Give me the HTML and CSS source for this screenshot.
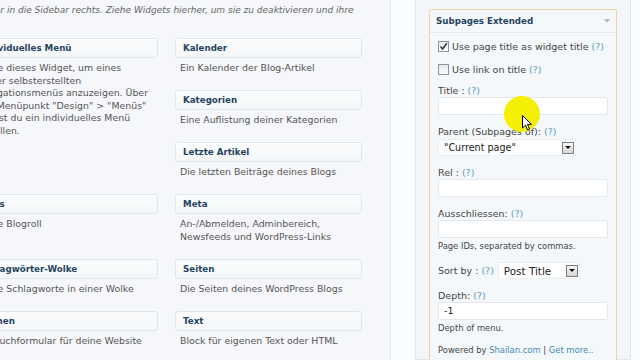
FILE: index.html
```html
<!DOCTYPE html>
<html lang="de">
  <head>
    <meta charset="utf-8">
    <title>Widgets</title>
    <link rel="stylesheet" href="styles.css">
  </head>
  <body>
    <div class="page">
      <div class="available">
        <p class="intro">Um Widgets zu aktivieren, ziehe sie von hier in die Sidebar rechts. Ziehe Widgets hierher, um sie zu deaktivieren und ihre Einstellungen zu löschen.</p>
        <div class="widget-list">
          <div class="widget tall">
            <div class="widget-title">Individuelles Menü</div>
            <div class="widget-desc">Nutze dieses Widget, um eines deiner selbsterstellten Navigationsmenüs anzuzeigen. Über den Menüpunkt &quot;Design&quot; &gt; &quot;Menüs&quot; kannst du ein individuelles Menü erstellen.</div>
          </div>
          <div class="widget">
            <div class="widget-title">Kalender</div>
            <div class="widget-desc">Ein Kalender der Blog-Artikel</div>
          </div>
          <div class="widget">
            <div class="widget-title">Kategorien</div>
            <div class="widget-desc">Eine Auflistung deiner Kategorien</div>
          </div>
          <div class="widget">
            <div class="widget-title">Letzte Artikel</div>
            <div class="widget-desc">Die letzten Beiträge deines Blogs</div>
          </div>
          <div class="widget">
            <div class="widget-title">Links</div>
            <div class="widget-desc">Deine Blogroll</div>
          </div>
          <div class="widget">
            <div class="widget-title">Meta</div>
            <div class="widget-desc">An-/Abmelden, Adminbereich, Newsfeeds und WordPress-Links</div>
          </div>
          <div class="widget">
            <div class="widget-title">Schlagwörter-Wolke</div>
            <div class="widget-desc">Deine Schlagworte in einer Wolke</div>
          </div>
          <div class="widget">
            <div class="widget-title">Seiten</div>
            <div class="widget-desc">Die Seiten deines WordPress Blogs</div>
          </div>
          <div class="widget">
            <div class="widget-title">Suchen</div>
            <div class="widget-desc">Ein Suchformular für deine Website</div>
          </div>
          <div class="widget">
            <div class="widget-title">Text</div>
            <div class="widget-desc">Block für eigenen Text oder HTML</div>
          </div>
        </div>
      </div>

      <div class="sidebar">
        <div class="sb-widget">
          <div class="sb-top">
            <span>Subpages Extended</span>
            <span class="sb-arrow"></span>
          </div>
          <div class="sb-inside">
            <div class="check-row">
              <span class="checkbox">
                <svg width="9" height="9" viewBox="0 0 9 9"><path d="M1.5 4.5 L3.6 7 L7.8 1.2" fill="none" stroke="#333" stroke-width="1.5"/></svg>
              </span>
              <span>Use page title as widget title <span class="help">(?)</span></span>
            </div>
            <div class="check-row">
              <span class="checkbox"></span>
              <span>Use link on title <span class="help">(?)</span></span>
            </div>

            <div class="field">
              <div class="field-label">Title : <span class="help">(?)</span></div>
              <div class="text-input"></div>
            </div>

            <div class="field">
              <div class="field-label">Parent (Subpages of): <span class="help">(?)</span></div>
              <div class="select parent-select">
                <span>&quot;Current page&quot;</span>
                <span class="select-btn"><span class="caret"></span></span>
              </div>
            </div>

            <div class="field">
              <div class="field-label">Rel : <span class="help">(?)</span></div>
              <div class="text-input"></div>
            </div>

            <div class="field note-field">
              <div class="field-label">Ausschliessen: <span class="help">(?)</span></div>
              <div class="text-input"></div>
              <div class="note">Page IDs, separated by commas.</div>
            </div>

            <div class="sort-row">
              <span>Sort by : <span class="help">(?)</span></span>
              <div class="select sort-select">
                <span>Post Title</span>
                <span class="select-btn"><span class="caret"></span></span>
              </div>
            </div>

            <div class="field note-field">
              <div class="field-label">Depth: <span class="help">(?)</span></div>
              <div class="text-input">-1</div>
              <div class="note">Depth of menu.</div>
            </div>

            <div class="note powered">Powered by <span class="link">Shailan.com</span> | <span class="link">Get more..</span></div>
          </div>
        </div>
      </div>
    </div>

    <div class="spot"></div>
    <svg class="pointer" width="11" height="17" viewBox="0 0 11 17">
      <path d="M0.5 0.5 L0.5 13 L3.5 10.2 L5.6 15 L7.6 14.1 L5.5 9.4 L9.4 9.4 Z" fill="#fff" stroke="#000" stroke-width="1"/>
    </svg>
  </body>
</html>
```

FILE: styles.css
```css
* {
  box-sizing: border-box;
}

body {
  margin: 0;
  background: #fbfcfd;
  font-family: "DejaVu Sans", Verdana, sans-serif;
  color: #444;
  overflow: hidden;
}

.page {
  display: flex;
  align-items: flex-start;
  height: 360px;
}

/* available widgets, left part is scrolled off screen */
.available {
  flex: none;
  width: 611px;
  height: 100%;
  margin-left: -220px;
  padding-top: 3.5px;
  background: #f5f7fa;
  border-right: 1px solid #e2e7ec;
}

.intro {
  margin: 0 0 0 23px;
  font-size: 9px;
  line-height: 13px;
  font-style: italic;
  color: #666;
}

.widget-list {
  display: grid;
  grid-template-columns: 187px 187px;
  column-gap: 17px;
  row-gap: 15.5px;
  align-items: start;
  margin: 8.5px 0 0 191px;
}

.widget.tall {
  grid-row: span 3;
}

.widget-title {
  height: 20px;
  padding: 0 7px;
  border: 1px solid #e0e6eb;
  border-radius: 3px;
  background: linear-gradient(#fbfcfd, #f4f7f9);
  font-size: 8.7px;
  font-weight: bold;
  line-height: 18px;
  color: #25445f;
  white-space: nowrap;
}

.widget-desc {
  margin-top: 4px;
  padding: 0 5px;
  font-size: 9.4px;
  line-height: 12.5px;
  color: #555;
}

/* sidebar with the open widget */
.sidebar {
  flex: none;
  width: 216px;
  height: 100%;
  margin-left: 24px;
  padding: 9px 13px 0;
  background: #f3f6f9;
  border: 1px solid #dfe5eb;
  border-top: 0;
}

.sb-widget {
  border: 1px solid #ecd5a3;
  border-bottom: 0;
  border-radius: 3px 3px 0 0;
  background: #f5f8fa;
  height: 360px;
}

.sb-top {
  display: flex;
  align-items: center;
  justify-content: space-between;
  height: 23px;
  padding: 0 6px;
  border-bottom: 1px solid #e3e8ed;
  font-size: 8.7px;
  font-weight: bold;
  color: #25445f;
}

.sb-arrow {
  width: 0;
  height: 0;
  border-top: 4px solid #b3bcc6;
  border-left: 3px solid transparent;
  border-right: 3px solid transparent;
}

.sb-inside {
  padding: 6px 8px 0;
  font-size: 9.5px;
  color: #444;
}

.help {
  color: #5b9cc0;
}

.check-row {
  display: flex;
  align-items: center;
  gap: 3px;
  height: 14px;
  margin-bottom: 9px;
  white-space: nowrap;
}

.checkbox {
  display: flex;
  align-items: center;
  justify-content: center;
  width: 11px;
  height: 11px;
  border: 1px solid #8d9399;
  background: linear-gradient(#e6e9ec, #fdfdfd);
}

.field {
  margin-bottom: 11px;
}

.note-field {
  margin-bottom: 10px;
}

.field-label {
  line-height: 12px;
}

.text-input {
  width: 170px;
  height: 18px;
  padding: 0 5px;
  border: 1px solid #e4e8ed;
  border-radius: 2px;
  background: #fff;
  font-size: 9.5px;
  line-height: 16px;
  color: #222;
}

.select {
  display: flex;
  align-items: center;
  justify-content: space-between;
  height: 17px;
  padding: 0 1px 0 5px;
  border: 1px solid #eceff2;
  background: #fff;
  color: #222;
}

.parent-select {
  width: 138px;
  margin-top: 1px;
  font-size: 9.6px;
}

.sort-select {
  width: 82px;
  font-size: 10.4px;
}

.select-btn {
  display: flex;
  align-items: center;
  justify-content: center;
  width: 12px;
  height: 12px;
  border: 1px solid #7b7b7b;
  background: linear-gradient(#f6f6f6, #d6d6d6);
}

.caret {
  width: 0;
  height: 0;
  border-top: 3px solid #111;
  border-left: 3px solid transparent;
  border-right: 3px solid transparent;
}

.sort-row {
  display: flex;
  align-items: center;
  gap: 4px;
  height: 17px;
  margin-bottom: 11px;
  white-space: nowrap;
}

.note {
  margin-top: 2px;
  font-size: 8.4px;
  line-height: 12px;
  color: #444;
}

.powered {
  margin-top: 0;
  white-space: nowrap;
}

.link {
  color: #3a8bb5;
}

/* screencast cursor highlight */
.spot {
  position: absolute;
  left: 504px;
  top: 96px;
  width: 36px;
  height: 36px;
  border-radius: 50%;
  background: #f4ef05;
}

.pointer {
  position: absolute;
  left: 522px;
  top: 115px;
}
```
